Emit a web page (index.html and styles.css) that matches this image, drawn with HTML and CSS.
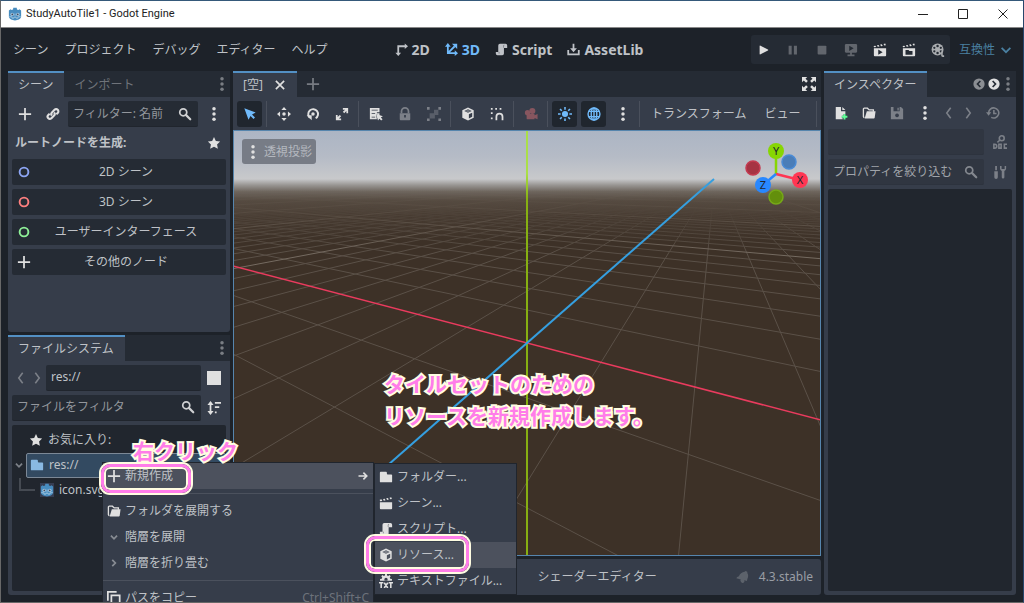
FILE: index.html
```html
<!DOCTYPE html>
<html lang="ja">
<head>
<meta charset="utf-8">
<title>StudyAutoTile1 - Godot Engine</title>
<link rel="stylesheet" href="styles.css">
</head>
<body>
<svg class="sprite" aria-hidden="true">
  <symbol id="plus" viewBox="0 0 16 16"><path d="M7 1h2v6h6v2H9v6H7V9H1V7h6z"/></symbol>
  <symbol id="dots" viewBox="0 0 16 16"><circle cx="8" cy="2" r="2"/><circle cx="8" cy="8" r="2"/><circle cx="8" cy="14" r="2"/></symbol>
  <symbol id="link" viewBox="0 0 16 16"><g fill="none" stroke="currentColor" stroke-width="2.400"><path d="M6.800 9.800a2.600 2.600 0 0 1 0-3.600l3-3a2.500 2.500 0 0 1 3.600 3.600l-1.600 1.600"/><path d="M9.200 6.200a2.600 2.600 0 0 1 0 3.600l-3 3a2.500 2.500 0 0 1-3.600-3.600l1.600-1.600"/></g></symbol>
  <symbol id="search" viewBox="0 0 16 16"><circle cx="6" cy="6" r="4" fill="none" stroke="currentColor" stroke-width="2"/><path d="M9 9l5 5" stroke="currentColor" stroke-width="2.500" stroke-linecap="round"/></symbol>
  <symbol id="star" viewBox="0 0 16 16"><path d="M8 1.200l2.100 4.400 4.900.7-3.500 3.400.9 4.900L8 12.300l-4.400 2.300.9-4.900L1 6.300l4.900-.7z"/></symbol>
  <symbol id="ring" viewBox="0 0 16 16"><circle cx="8" cy="8" r="5" fill="none" stroke="currentColor" stroke-width="2.200"/></symbol>
  <symbol id="left" viewBox="0 0 10 16"><path d="M7.500 2L3 8l4.500 6" fill="none" stroke="currentColor" stroke-width="1.800"/></symbol>
  <symbol id="right" viewBox="0 0 10 16"><path d="M2.500 2L7 8l-4.500 6" fill="none" stroke="currentColor" stroke-width="1.800"/></symbol>
  <symbol id="down" viewBox="0 0 16 16"><path d="M3 5.500l5 5 5-5" fill="none" stroke="currentColor" stroke-width="2"/></symbol>
  <symbol id="smalldown" viewBox="0 0 16 16"><path d="M4.500 6.500L8 10l3.500-3.500" fill="none" stroke="currentColor" stroke-width="2"/></symbol>
  <symbol id="smallright" viewBox="0 0 16 16"><path d="M6 4.500L9.500 8 6 11.500" fill="none" stroke="currentColor" stroke-width="2"/></symbol>
  <symbol id="arrow" viewBox="0 0 16 16"><path d="M2 8h10M8.500 3.500L13 8l-4.500 4.500" fill="none" stroke="currentColor" stroke-width="2.200"/></symbol>
  <symbol id="cross" viewBox="0 0 16 16"><path d="M2.500 2.500l11 11M13.500 2.500l-11 11" stroke="currentColor" stroke-width="2.200"/></symbol>
  <symbol id="sort" viewBox="0 0 16 16"><path d="M3 4.500H.5L4 0l3.500 4.500H5v7h2.500L4 16 .5 11.500H3zM9 1h7v2H9zM9 6h5v2H9zM9 12h2v2H9z"/></symbol>
  <symbol id="folder" viewBox="0 0 16 16"><path d="M2 2a1 1 0 0 0-1 1v10a1 1 0 0 0 1 1h12a1 1 0 0 0 1-1V6a1 1 0 0 0-1-1h-4a1 1 0 0 1-1-1V3a1 1 0 0 0-1-1z"/></symbol>
  <symbol id="open" viewBox="0 0 16 16"><path d="M2.500 13.500L1.600 12V3.500a1 1 0 0 1 1-1h3.600l2 2H13v2" fill="none" stroke="currentColor" stroke-width="1.500"/><path d="M5.500 6H15.500l-1 7.500a1 1 0 0 1-1 .8H3z"/></symbol>
  <symbol id="clapper" viewBox="0 0 16 16"><path d="M1 7h14v7a1 1 0 0 1-1 1H2a1 1 0 0 1-1-1zM.8 4.200l2-.4 1 1.800-2.600.3zM4.600 3.400l1.900-.4 1 1.900-2 .4zM8.300 2.600l1.900-.4 1 1.900-2 .4zM12 1.900l2-.4.700 1.900-1.800.4z"/></symbol>
  <symbol id="script" viewBox="0 0 16 16"><path d="M6 1a2 2 0 0 0-2 2v8H1v2a2 2 0 0 0 2 2h6a2 2 0 0 0 2-2V6h4V3a2 2 0 0 0-2-2z"/><path d="M10.500 5.800V3.500a1 1 0 0 1 1-1M5 11v2" fill="none" stroke="#1d2229" stroke-opacity=".45"/></symbol>
  <symbol id="cube" viewBox="0 0 16 16"><path d="M8 .7L1.500 3.800v8.400L8 15.300l6.500-3.100V3.800zM8 2.600l4.300 2L8 6.700l-4.300-2.100zM9 8.400l3.800-1.800v4.600L9 13z" fill-rule="evenodd"/><path d="M8 3l3.500 1.600L8 6.300 4.500 4.600z" opacity=".35"/></symbol>
  <symbol id="text" viewBox="0 0 16 16"><path d="M7 0h2l.3 1.800 1.200.5L12 1.200 13.400 2.600l-1.100 1.500.5 1.200 2 .3v2H1.200v-2l2-.3.5-1.200-1.100-1.500L4 1.200l1.500 1.100 1.200-.5zM8 4.300A1.900 1.900 0 0 0 6.100 6.200L6.500 8h3l.4-1.800A1.900 1.900 0 0 0 8 4.300z" fill-rule="evenodd"/><path d="M0 10h5M2.500 10v6M6 10l4 6M10 10l-4 6M11 10h5M13.500 10v6" stroke="currentColor" stroke-width="1.800"/></symbol>
  <symbol id="copy" viewBox="0 0 16 16"><path d="M1 11V1h10M5 5h9.500v10H5z" fill="none" stroke="currentColor" stroke-width="2"/></symbol>
  <symbol id="axis2" viewBox="0 0 16 16"><path d="M4 13V4h9" fill="none" stroke="currentColor" stroke-width="2.200"/><path d="M12 .5L16 4l-4 3.500zM.5 12h7L4 16z"/></symbol>
  <symbol id="axis3" viewBox="0 0 16 16"><path d="M3.500 3v9.500H13M3.500 12.500L12 4" fill="none" stroke="currentColor" stroke-width="2.200"/><path d="M0 4.500L3.500 0 7 4.500zM12 9l4 3.500-4 3.500zM8.500 1H15v6.500z"/></symbol>
  <symbol id="download" viewBox="0 0 16 16"><path d="M1.500 8.500V14h13V8.500M8 1v7" fill="none" stroke="currentColor" stroke-width="2.200"/><path d="M3.800 6.500h8.400L8 11.500z"/></symbol>
  <symbol id="play" viewBox="0 0 16 16"><path d="M3 3.500v9a.6.6 0 0 0 1 .4l8.500-4.400a.6.6 0 0 0 0-1L4 3.100a.6.6 0 0 0-1 .4z"/></symbol>
  <symbol id="pause" viewBox="0 0 16 16"><path d="M3 3h3.500v10H3zM9 3h3.500v10H9z"/></symbol>
  <symbol id="stop" viewBox="0 0 16 16"><rect x="3" y="3" width="10" height="10" rx="1"/></symbol>
  <symbol id="remote" viewBox="0 0 16 16"><path d="M2 1h12l1 1v8l-1 1H9v2h3v2H4v-2h3v-2H2l-1-1V2zM6 3v6l5-3z" fill-rule="evenodd"/></symbol>
  <symbol id="playscene" viewBox="0 0 16 16"><path d="M1 6h14v8a1 1 0 0 1-1 1H2a1 1 0 0 1-1-1zM6 7.500v6L11 10.500zM.7 3.400l2-.4 1 1.600-2.500.3zM4.500 2.600l1.900-.4 1 1.900-2 .3zM8.200 1.800l1.900-.4 1 1.900-2 .4zM12 1l2-.4.700 1.900-1.800.4z" fill-rule="evenodd"/></symbol>
  <symbol id="playcustom" viewBox="0 0 16 16"><path d="M1 6h14v8a1 1 0 0 1-1 1H2a1 1 0 0 1-1-1zM4 8v5.500h8V9H8.500l-1-1zM.7 3.400l2-.4 1 1.600-2.500.3zM4.500 2.600l1.900-.4 1 1.900-2 .3zM8.200 1.800l1.900-.4 1 1.900-2 .4zM12 1l2-.4.700 1.900-1.800.4z" fill-rule="evenodd"/></symbol>
  <symbol id="movie" viewBox="0 0 16 16"><circle cx="7.500" cy="7.500" r="6.800"/><g fill="#252b34"><circle cx="7.500" cy="3.500" r="1.400"/><circle cx="7.500" cy="11.500" r="1.400"/><circle cx="3.800" cy="5.500" r="1.300"/><circle cx="11.200" cy="5.500" r="1.300"/><circle cx="3.800" cy="9.500" r="1.300"/><circle cx="11.200" cy="9.500" r="1.300"/></g><path d="M12.500 9.500v4.500a1 1 0 0 0 1 1H15" fill="none" stroke="currentColor" stroke-width="1.800"/></symbol>
  <symbol id="cursor" viewBox="0 0 16 16"><path d="M1.500 1.500l4.800 13 2.300-4.200 3.400 3.400 1.700-1.700-3.400-3.400 4.200-2.300z"/></symbol>
  <symbol id="move" viewBox="0 0 16 16"><path d="M8 0l3 3.500H5zM8 16l-3-3.500h6zM0 8l3.500-3v6zM16 8l-3.500 3V5z"/><circle cx="8" cy="8" r="2"/></symbol>
  <symbol id="rotate" viewBox="0 0 16 16"><path d="M4.500 12.300A5.600 5.600 0 1 1 11 12.900" fill="none" stroke="currentColor" stroke-width="2.200"/><path d="M.8 9.500h5.700v5.700z"/><circle cx="8" cy="8" r="2"/></symbol>
  <symbol id="scale" viewBox="0 0 16 16"><path d="M9 1h6v6h-2V4.500L10.500 7 9 5.500 11.500 3H9zM1 9h2v2.500L5.500 9 7 10.500 4.500 13H7v2H1z"/></symbol>
  <symbol id="list" viewBox="0 0 16 16"><path d="M1 1h11v5H9v1h3v3l-1.500-.8L8 8l1 6H1zM3 3v1h7V3zm0 4v1h4V7zm0 4v1h4v-1z" fill-rule="evenodd"/><path d="M8 8l2.300 7.500 1.600-2.200 2 2.200 1.600-1.500-2-2.100 2.400-1.400z"/></symbol>
  <symbol id="lock" viewBox="0 0 16 16"><path d="M4 7V5a4 4 0 0 1 8 0v2" fill="none" stroke="currentColor" stroke-width="2"/><path d="M2 7h12v7a1 1 0 0 1-1 1H3a1 1 0 0 1-1-1zM7 9v3h2V9z" fill-rule="evenodd"/></symbol>
  <symbol id="group" viewBox="0 0 16 16"><path d="M0 0h3v3H0zM13 0h3v3h-3zM0 13h3v3H0zM13 13h3v3h-3z"/><path d="M8 3h5v6H9v4H3V7h5z" opacity=".5"/></symbol>
  <symbol id="magnet" viewBox="0 0 16 16"><path d="M1 1h2v2H1zM6 1h2v2H6zM11 1h2v2h-2zM1 6h2v2H1zM1 12h2v2H1z"/><path d="M7.300 15v-4a3.500 3.500 0 0 1 7 0v4" fill="none" stroke="currentColor" stroke-width="2"/></symbol>
  <symbol id="camera" viewBox="0 0 16 16"><circle cx="9.500" cy="4.500" r="3.500"/><circle cx="4" cy="6.500" r="3"/><path d="M3 8h9v1.500L15.500 8v6L12 12.500V14H4a1 1 0 0 1-1-1z"/></symbol>
  <symbol id="sun" viewBox="0 0 16 16"><circle cx="8" cy="8" r="3.500"/><path d="M8 0v3M8 13v3M0 8h3M13 8h3M2.300 2.300l2 2M11.700 11.700l2 2M2.300 13.700l2-2M11.700 4.300l2-2" stroke="currentColor" stroke-width="1.800"/></symbol>
  <symbol id="globe" viewBox="0 0 16 16"><g fill="none" stroke="currentColor" stroke-width="1.600"><circle cx="8" cy="8" r="6.800"/><ellipse cx="8" cy="8" rx="3.200" ry="6.800"/><path d="M8 1v14M2 5h12M2 11h12"/></g></symbol>
  <symbol id="expand" viewBox="0 0 16 16"><path d="M0 0h6L4 2l2.700 2.700-2 2L2 4 0 6zM16 0v6l-2-2-2.700 2.700-2-2L12 2l-2-2zM0 16v-6l2 2 2.700-2.700 2 2L4 14l2 2zM16 16h-6l2-2-2.700-2.700 2-2L14 12l2-2z"/></symbol>
  <symbol id="new" viewBox="0 0 16 16"><path d="M2 1h6v5h5v3h-2v2H9v3h1v1H2zM9.500 1L13 4.700H9.500z"/><path d="M12 9v6.500M8.800 12.300h6.500" stroke="#5fff97" stroke-width="2.200"/></symbol>
  <symbol id="save" viewBox="0 0 16 16"><path d="M1 1h11.500L15 3.500V15H1zM4 1v5h7V1zM8 8.500a2.200 2.200 0 1 0 .1 0z" fill-rule="evenodd"/><path d="M8.500 2H10v3H8.500z"/></symbol>
  <symbol id="circleleft" viewBox="0 0 16 16"><circle cx="8" cy="8" r="7.500"/><path d="M9.800 4L6 8l3.800 4" fill="none" stroke="#252b34" stroke-width="2.200"/></symbol>
  <symbol id="circleright" viewBox="0 0 16 16"><circle cx="8" cy="8" r="7.500"/><path d="M6.200 4L10 8l-3.800 4" fill="none" stroke="#252b34" stroke-width="2.200"/></symbol>
  <symbol id="history" viewBox="0 0 16 16"><path d="M3 8a5.800 5.800 0 1 1 3 5M9 4.500v4h3" fill="none" stroke="currentColor" stroke-width="1.800"/><path d="M0 7h6l-3 4z"/></symbol>
  <symbol id="doc" viewBox="0 0 16 16"><g fill="none" stroke="currentColor" stroke-width="1.800"><circle cx="10" cy="3.700" r="2.800"/><path d="M8 5.700L5 8.500M1 10.500v4.500h1a2.200 2.200 0 0 0 0-4.500zM6.700 10.600h2.600V15H6.700zM16 10.600h-3V15h3"/></g></symbol>
  <symbol id="tools" viewBox="0 0 16 16"><path d="M2.500 1h2v5h-2zM1.500 7h4v7a2 2 0 0 1-4 0zM8 1v3a3 3 0 0 0 2 2.800V14a1.500 1.500 0 0 0 3 0V6.800A3 3 0 0 0 15 4V1h-1.700v3.500h-3.500V1z"/></symbol>
  <symbol id="bell" viewBox="0 0 16 16"><path d="M12 1l2 1 .2 1.600c1.300 2 1 4.400 0 6.400l-.6 2.600-3-.8a2 2 0 0 1-3.600 1.800 2 2 0 0 1-.4-2.800L1.500 9.500l1-1.600 2-.8C5.500 4.500 8 2 11 2z"/></symbol>
  <symbol id="godot" viewBox="0 0 16 16"><path d="M1 4l2-1.500 1 1 1.800-.6L6 .8h4l.2 2.100 1.800.6 1-1L15 4v7.500C14 14 11.500 15.300 8 15.300S2 14 1 11.500z" fill="#478cbf"/><circle cx="4.700" cy="8.500" r="2" fill="#a9cbe4"/><circle cx="11.300" cy="8.500" r="2" fill="#a9cbe4"/><circle cx="4.900" cy="8.500" r="1" fill="#414a5c"/><circle cx="11.100" cy="8.500" r="1" fill="#414a5c"/><path d="M8 7.500v2.500M1.500 11l3 .3.300 1.500h1.700L7 11.500h2l.5 1.300h1.700l.3-1.500 3-.3" fill="none" stroke="#a9cbe4"/></symbol>
</svg>

<div class="window">
  <header class="titlebar">
    <svg class="logo"><use href="#godot"/></svg>
    <h1>StudyAutoTile1 - Godot Engine</h1>
    <button aria-label="最小化"><svg viewBox="0 0 10 10"><path d="M0 5.500h10"/></svg></button>
    <button aria-label="最大化"><svg viewBox="0 0 10 10"><path d="M.5.500h9v9h-9z"/></svg></button>
    <button aria-label="閉じる"><svg viewBox="0 0 10 10"><path d="M.5.500l9 9M9.500.500l-9 9"/></svg></button>
  </header>

  <div class="menubar">
    <nav class="menus">
      <button>シーン</button><button>プロジェクト</button><button>デバッグ</button><button>エディター</button><button>ヘルプ</button>
    </nav>
    <nav class="modes">
      <button><svg><use href="#axis2"/></svg>2D</button>
      <button class="on"><svg><use href="#axis3"/></svg>3D</button>
      <button><svg><use href="#script"/></svg>Script</button>
      <button><svg><use href="#download"/></svg>AssetLib</button>
    </nav>
    <div class="run">
      <div class="runbar">
        <button class="tool" aria-label="実行"><svg><use href="#play"/></svg></button>
        <button class="tool dim" aria-label="一時停止"><svg><use href="#pause"/></svg></button>
        <button class="tool dim" aria-label="停止"><svg><use href="#stop"/></svg></button>
        <button class="tool dim" aria-label="リモート"><svg><use href="#remote"/></svg></button>
        <button class="tool" aria-label="シーンを実行"><svg><use href="#playscene"/></svg></button>
        <button class="tool" aria-label="シーンを選んで実行"><svg><use href="#playcustom"/></svg></button>
        <button class="tool soft" aria-label="ムービー"><svg><use href="#movie"/></svg></button>
      </div>
      <label class="renderer"><select aria-label="レンダラー"><option>互換性</option></select><svg><use href="#down"/></svg></label>
    </div>
  </div>

  <main class="workspace">
    <div class="column">
      <section class="dock">
        <div class="tabs"><button class="tab on">シーン</button><button class="tab">インポート</button><button class="more" aria-label="ドックの設定"><svg><use href="#dots"/></svg></button></div>
        <div class="body">
          <div class="row">
            <button class="tool" aria-label="追加"><svg><use href="#plus"/></svg></button>
            <button class="tool" aria-label="インスタンス化"><svg><use href="#link"/></svg></button>
            <label class="field"><input placeholder="フィルター: 名前" aria-label="フィルター"><svg><use href="#search"/></svg></label>
            <button class="tool" aria-label="その他"><svg><use href="#dots"/></svg></button>
          </div>
          <div class="row heading"><h2>ルートノードを生成:</h2><button class="tool" aria-label="お気に入り"><svg><use href="#star"/></svg></button></div>
          <button class="node blue"><svg><use href="#ring"/></svg><span>2D シーン</span></button>
          <button class="node red"><svg><use href="#ring"/></svg><span>3D シーン</span></button>
          <button class="node green"><svg><use href="#ring"/></svg><span>ユーザーインターフェース</span></button>
          <button class="node"><svg><use href="#plus"/></svg><span>その他のノード</span></button>
        </div>
      </section>

      <section class="dock">
        <div class="tabs"><button class="tab on">ファイルシステム</button><button class="more" aria-label="ドックの設定"><svg><use href="#dots"/></svg></button></div>
        <div class="body">
          <div class="row tight">
            <button class="step" aria-label="戻る"><svg><use href="#left"/></svg></button>
            <button class="step" aria-label="進む"><svg><use href="#right"/></svg></button>
            <label class="field"><input value="res://" aria-label="パス"></label>
            <button class="tool" aria-label="分割モード"><span class="square"></span></button>
          </div>
          <div class="row tight">
            <label class="field"><input placeholder="ファイルをフィルタ" aria-label="ファイルをフィルタ"><svg><use href="#search"/></svg></label>
            <button class="tool" aria-label="並べ替え"><svg><use href="#sort"/></svg></button>
          </div>
          <ul class="tree">
            <li class="fav"><svg><use href="#star"/></svg>お気に入り:</li>
            <li class="root"><svg class="fold"><use href="#smalldown"/></svg><span class="selected"><svg><use href="#folder"/></svg>res://</span></li>
            <li class="file"><span class="branch"></span><svg class="thumb"><use href="#godot"/></svg>icon.svg</li>
          </ul>
        </div>
      </section>
    </div>

    <div class="column">
      <section class="editor">
        <div class="tabs"><button class="tab on">[空]<svg><use href="#cross"/></svg></button><button class="add" aria-label="シーンを追加"><svg><use href="#plus"/></svg></button><button class="wide" aria-label="集中モード"><svg><use href="#expand"/></svg></button></div>
        <div class="toolbar">
          <button class="tool on" aria-label="選択"><svg><use href="#cursor"/></svg></button>
          <i class="sep"></i>
          <button class="tool" aria-label="移動"><svg><use href="#move"/></svg></button>
          <button class="tool" aria-label="回転"><svg><use href="#rotate"/></svg></button>
          <button class="tool" aria-label="拡大縮小"><svg><use href="#scale"/></svg></button>
          <i class="sep"></i>
          <button class="tool" aria-label="リスト選択"><svg><use href="#list"/></svg></button>
          <button class="tool dim" aria-label="ロック"><svg><use href="#lock"/></svg></button>
          <button class="tool dim" aria-label="グループ化"><svg><use href="#group"/></svg></button>
          <i class="sep"></i>
          <button class="tool" aria-label="ローカル空間"><svg><use href="#cube"/></svg></button>
          <button class="tool" aria-label="スナップ"><svg><use href="#magnet"/></svg></button>
          <i class="sep"></i>
          <button class="tool cam" aria-label="カメラ"><svg><use href="#camera"/></svg></button>
          <i class="sep"></i>
          <button class="tool on" aria-label="太陽光"><svg><use href="#sun"/></svg></button>
          <button class="tool on" aria-label="環境"><svg><use href="#globe"/></svg></button>
          <button class="tool" aria-label="その他"><svg><use href="#dots"/></svg></button>
          <i class="sep"></i>
          <button class="word">トランスフォーム</button>
          <button class="word">ビュー</button>
          <i class="sep last"></i>
        </div>
        <div class="viewport">
          <svg class="scene" viewBox="-293 -212 586 424" preserveAspectRatio="xMidYMid slice">
            <defs>
              <linearGradient id="sky" x1="0" y1="0" x2="0" y2="1">
                <stop offset="0" stop-color="#acb5c4"/><stop offset=".06" stop-color="#b5bbc6"/><stop offset=".113" stop-color="#c8c9cb"/>
                <stop offset=".128" stop-color="#979491"/><stop offset=".143" stop-color="#6e665e"/><stop offset=".165" stop-color="#554a40"/>
                <stop offset=".2" stop-color="#473b31"/><stop offset=".26" stop-color="#3d3127"/><stop offset="1" stop-color="#3d3127"/>
              </linearGradient>
              <linearGradient id="fade" gradientUnits="userSpaceOnUse" x1="0" y1="-212" x2="0" y2="212">
                <stop offset=".14" stop-color="#000"/><stop offset=".2" stop-color="#555"/><stop offset=".29" stop-color="#fff"/>
              </linearGradient>
              <mask id="haze" maskUnits="userSpaceOnUse" x="-600" y="-212" width="1200" height="424"><rect x="-600" y="-212" width="1200" height="424" fill="url(#fade)"/></mask>
              <linearGradient id="green" gradientUnits="userSpaceOnUse" x1="0" y1="-212" x2="0" y2="212"><stop offset=".1" stop-color="#aadf48"/><stop offset=".16" stop-color="#86b012"/><stop offset="1" stop-color="#87ae12"/></linearGradient>
            </defs>
            <rect x="-600" y="-212" width="1200" height="424" fill="url(#sky)"/>
            <g mask="url(#haze)"><path id="minor"/><path id="major"/></g>
            <path id="axisx"/>
            <path id="axisy" d="M0-212V212"/>
            <path id="axisz"/>
          </svg>
          <button class="view"><svg><use href="#dots"/></svg>透視投影</button>
          <svg class="gizmo" viewBox="0 0 64 64">
            <g stroke-width="2.500"><path d="M31 32V8" stroke="#87d602"/><path d="M31 32l24 6" stroke="#ff3653"/><path d="M31 32L18 43" stroke="#2888ff"/></g>
            <g stroke-width="1.500"><circle cx="8" cy="26" r="7" fill="#a63343" stroke="#c43a50"/><circle cx="44" cy="20" r="7" fill="#4a7db8" stroke="#4a8bd6"/><circle cx="31" cy="55" r="7" fill="#638f0c" stroke="#76a818"/></g>
            <circle cx="31" cy="9" r="8" fill="#87d602"/><circle cx="55" cy="38" r="8" fill="#ff3653"/><circle cx="18" cy="43" r="8" fill="#2888ff"/>
            <text x="31" y="13">Y</text><text x="55" y="42">X</text><text x="18" y="47">Z</text>
          </svg>
        </div>
      </section>
      <footer class="bottom">
        <button>シェーダーエディター</button>
        <svg><use href="#bell"/></svg><span>4.3.stable</span>
      </footer>
    </div>

    <section class="dock">
      <div class="tabs"><button class="tab on">インスペクター</button><div class="pager"><svg class="back"><use href="#circleleft"/></svg><svg><use href="#circleright"/></svg></div><button class="more" aria-label="ドックの設定"><svg><use href="#dots"/></svg></button></div>
      <div class="body">
        <div class="row short">
          <button class="tool" aria-label="新規リソース"><svg><use href="#new"/></svg></button>
          <button class="tool" aria-label="開く"><svg><use href="#open"/></svg></button>
          <button class="tool dim" aria-label="保存"><svg><use href="#save"/></svg></button>
          <button class="tool" aria-label="その他"><svg><use href="#dots"/></svg></button>
          <button class="step" aria-label="前へ"><svg><use href="#left"/></svg></button>
          <button class="step" aria-label="次へ"><svg><use href="#right"/></svg></button>
          <button class="tool dim" aria-label="履歴"><svg><use href="#history"/></svg></button>
        </div>
        <div class="row"><div class="field off"></div><button class="tool dim" aria-label="ドキュメント"><svg><use href="#doc"/></svg></button></div>
        <div class="row"><label class="field off"><input placeholder="プロパティを絞り込む" aria-label="プロパティを絞り込む"><svg><use href="#search"/></svg></label><button class="tool dim" aria-label="プロパティ設定"><svg><use href="#tools"/></svg></button></div>
        <div class="panel"></div>
      </div>
    </section>
  </main>

  <div class="popup context" role="menu">
    <button class="hover"><svg><use href="#plus"/></svg>新規作成<svg class="end"><use href="#arrow"/></svg></button>
    <hr>
    <button><svg><use href="#open"/></svg>フォルダを展開する</button>
    <button><svg class="grey"><use href="#smalldown"/></svg>階層を展開</button>
    <button><svg class="grey"><use href="#smallright"/></svg>階層を折り畳む</button>
    <hr>
    <button><svg><use href="#copy"/></svg>パスをコピー<kbd>Ctrl+Shift+C</kbd></button>
  </div>
  <div class="popup submenu" role="menu">
    <button><svg><use href="#folder"/></svg>フォルダー...</button>
    <button><svg><use href="#clapper"/></svg>シーン...</button>
    <button><svg><use href="#script"/></svg>スクリプト...</button>
    <button class="hover"><svg><use href="#cube"/></svg>リソース...</button>
    <button><svg><use href="#text"/></svg>テキストファイル...</button>
  </div>

  <div class="frame first"></div>
  <div class="frame second"></div>
  <p class="note click">右クリック</p>
  <p class="note explain">タイルセットのための<br>リソースを新規作成します。</p>
</div>
<script src="grid.js"></script>
</body>
</html>
```
FILE: grid.js
```js
// Ground grid seen by an orbit camera: yaw and pitch of 0.5 rad, 4 units from the origin.
const yaw = 0.5, pitch = 0.5, distance = 4, focal = 302, near = 0.3, extent = 100;

function toCamera(x, z) {
  const side = x * Math.cos(yaw) - z * Math.sin(yaw);
  const ahead = -x * Math.sin(yaw) - z * Math.cos(yaw);
  return [side, -ahead * Math.sin(pitch), distance + ahead * Math.cos(pitch)];
}

function segment(x1, z1, x2, z2) {
  let a = toCamera(x1, z1), b = toCamera(x2, z2);
  if (a[2] < near && b[2] < near) return "";
  if (a[2] > b[2]) [a, b] = [b, a];
  if (a[2] < near) {
    const t = (near - a[2]) / (b[2] - a[2]);
    a = a.map((v, i) => v + t * (b[i] - v));
  }
  const point = p => (focal * p[0] / p[2]).toFixed(1) + " " + (focal * p[1] / p[2]).toFixed(1);
  return "M" + point(a) + "L" + point(b);
}

let minor = "", major = "";
for (let i = -extent; i <= extent; i++) {
  if (i === 0) continue;
  const lines = segment(i, -extent, i, extent) + segment(-extent, i, extent, i);
  if (i % 8 === 0) major += lines;
  else if (Math.abs(i) < 40) minor += lines;
}
document.getElementById("minor").setAttribute("d", minor);
document.getElementById("major").setAttribute("d", major);
document.getElementById("axisx").setAttribute("d", segment(-1000, 0, 1000, 0));
document.getElementById("axisz").setAttribute("d", segment(0, -1000, 0, 1000));
```
FILE: styles.css
```css
* { box-sizing: border-box; }

body {
  margin: 0;
  background: #1d2229;
  color: #bfc2c7;
  font: 12px/18px "Noto Sans", "Noto Sans CJK JP", sans-serif;
}

button, input, select {
  margin: 0;
  padding: 0;
  border: 0;
  background: none;
  color: inherit;
  font: inherit;
}

button { white-space: nowrap; }
h1, h2, p, ul { margin: 0; padding: 0; font: inherit; }
svg { width: 14px; height: 14px; flex: none; fill: currentColor; }
.sprite { position: absolute; width: 0; height: 0; }

.window {
  position: relative;
  display: flex;
  flex-direction: column;
  height: 100vh;
  overflow: hidden;
  border: 1px solid #686868;
  border-top-color: #35597a;
  border-right-color: #28476c;
}

.titlebar {
  display: flex;
  align-items: center;
  height: 27px;
  padding-left: 7px;
  border-bottom: 1px solid #888;
  background: #fff;
  color: #222;
}
.titlebar h1 { flex: 1; margin-left: 4px; font: 11px/18px Roboto, sans-serif; }
.titlebar button { display: grid; place-items: center; width: 40px; height: 24px; }
.titlebar button svg { width: 10px; height: 10px; fill: none; stroke: #222; }

.menubar {
  display: grid;
  grid-template-columns: 1fr auto 1fr;
  align-items: center;
  height: 43px;
  flex: none;
  padding: 0 11px 0 12px;
}
.menus { display: flex; gap: 16px; }
.modes { display: flex; gap: 15px; margin-left: 13px; font-size: 14px; font-weight: 700; }
.modes button { display: flex; align-items: center; gap: 4px; }
.modes svg { width: 13px; height: 13px; }
.modes .on { color: #70bafa; }
.run { display: flex; justify-content: flex-end; align-items: center; gap: 9px; }
.runbar { display: flex; gap: 4px; padding: 1px 0; border-radius: 3px; background: #252b34; }
.runbar .tool { height: 27px; }
.renderer { display: flex; align-items: center; gap: 3px; margin-right: -1px; color: #4a80a1; }
.renderer select { appearance: none; }

.tool { display: grid; place-items: center; flex: none; width: 25px; height: 26px; border-radius: 3px; color: #e0e0e0; }
.tool.dim { color: #7c8088; }
.tool.soft { color: #aaadb0; }
.tool.on { background: #20262e; color: #70bafa; }
.tool.cam { color: #87565f; }
.runbar .dim { color: #62666d; }
.step { display: grid; place-items: center; flex: none; width: 17px; height: 24px; color: #7c8088; }
.step svg { width: 9px; }
.square { width: 14px; height: 14px; background: #e0e0e0; }

.workspace {
  flex: 1;
  min-height: 0;
  display: grid;
  grid-template-columns: 222px minmax(0, 1fr) 192px;
  gap: 3px;
  padding: 0 7px 7px;
}
.column { display: flex; flex-direction: column; gap: 3px; min-height: 0; }
.dock { flex: 1; display: flex; flex-direction: column; min-height: 0; border-radius: 3px; background: #363d4a; }
.tabs { display: flex; align-items: stretch; flex: none; height: 26px; background: #252b34; }
.tab { display: flex; align-items: center; gap: 11px; padding: 0 10px; border-top: 2px solid transparent; color: #6f737a; }
.tab.on { padding: 0 11px 0 10px; border-top-color: #5390c4; background: #363d4a; color: #bfc2c7; }
.tab svg { width: 12px; height: 12px; color: #e0e0e0; }
.more, .wide { display: grid; place-items: center; margin-left: auto; width: 16px; color: #7a7e84; }
.wide { width: 25px; color: #e0e0e0; }
.add { display: grid; place-items: center; width: 32px; color: #777b82; }
.pager { display: flex; align-items: center; gap: 3px; margin-left: auto; color: #e0e0e0; }
.pager svg { width: 12px; height: 12px; }
.pager .back { color: #8b8e93; }
.pager + .more { margin-left: 0; }

.body { flex: 1; display: flex; flex-direction: column; gap: 4px; min-height: 0; padding: 4px; }
.row { display: flex; align-items: center; gap: 3px; min-height: 26px; }
.row.short { min-height: 24px; height: 24px; }
.row.tight { gap: 0; }
.row.heading { justify-content: space-between; min-height: 24px; height: 24px; padding-left: 3px; }
.heading h2 { font-weight: 700; }
.field {
  flex: 1;
  min-width: 0;
  display: flex;
  align-items: center;
  height: 26px;
  padding: 0 6px 0 5px;
  border-bottom: 1px solid #20252d;
  border-radius: 2px;
  background: #252b34;
}
.field.off { border-color: #2d333e; background: #303641; color: #8b8f96; }
.field input { flex: 1; min-width: 0; outline: 0; }
.field svg { color: #cfd0d2; }
.field.off svg { color: #84888f; }
.field input::placeholder { color: #93979d; opacity: 1; }
.field.off input::placeholder { color: #a0a4aa; }

.node { display: flex; align-items: center; height: 26px; flex: none; padding: 0 5px; border-radius: 2px; background: #252b34; }
.node span { flex: 1; }
.node svg { color: #e0e0e0; }
.node.blue svg { color: #8da5f3; }
.node.red svg { color: #fc7f7f; }
.node.green svg { color: #8eef97; }

.tree, .panel { flex: 1; min-height: 0; border-radius: 2px; background: #21262e; }
.tree { padding-top: 3px; list-style: none; }
.tree li { display: flex; align-items: center; height: 25px; }
.tree svg { color: #e0e0e0; }
.tree .fav { gap: 5px; padding-left: 17px; }
.tree .fold { width: 14px; color: #7c8088; }
.selected { flex: 1; display: flex; align-items: center; gap: 5px; height: 25px; padding-left: 3px; border: 1px solid #7c8896; border-radius: 2px; background: #334a61; }
.tree .selected svg { color: #89b9e3; }
.branch { align-self: flex-start; width: 16px; height: 13px; margin: 0 5px 0 7px; border: solid #454a52; border-width: 0 0 2px 2px; }
.thumb { margin-right: 5px; background: #363d52; }

.editor { flex: 1; min-height: 0; display: flex; flex-direction: column; }
.toolbar { display: flex; align-items: center; gap: 4px; flex: none; height: 33px; padding: 0 4px; background: #363d4a; }
.sep { width: 1px; height: 26px; background: #4a505c; }
.word { padding: 0 7px; }
.sep.last { margin-left: auto; }
.viewport { position: relative; flex: 1; min-height: 0; border: 1px solid #5685ad; }
.scene { display: block; width: 100%; height: 100%; }
.scene path { fill: none; }
#minor { stroke: #5b5148; stroke-width: 1; }
#major { stroke: #756b61; stroke-width: 1; }
#axisx { stroke: #e93b5e; stroke-width: 1.5; }
#axisy { stroke: url(#green); stroke-width: 2; }
#axisz { stroke: #359fe0; stroke-width: 2; }
.view { position: absolute; left: 8px; top: 8px; display: flex; align-items: center; gap: 4px; height: 25px; padding: 0 4px; border-radius: 3px; background: #777c86; color: #b4b8bf; }
.view svg { color: #e0e0e0; }
.gizmo { position: absolute; top: 11px; right: 11px; width: 64px; height: 64px; }
.gizmo text { fill: #20262e; font-size: 11px; text-anchor: middle; }

.bottom { display: flex; align-items: center; justify-content: flex-end; flex: none; height: 36px; padding: 0 8px; border-radius: 3px; background: #363d4a; }
.bottom svg { margin: 0 10px 0 78px; color: #5c626b; }
.bottom span { color: #9a9ea5; }

.popup { position: absolute; border: 1px solid #20252d; background: #363d4a; }
.popup button { display: flex; align-items: center; gap: 4px; width: 100%; height: 26px; padding: 0 4px; }
.popup .hover { background: #4c515d; }
.popup svg { color: #e0e0e0; }
.popup .grey { color: #888c93; }
.popup .end { margin-left: auto; width: 12px; }
.popup hr { margin: 4px 0; border: 0; border-top: 1px solid #4b515d; }
.popup kbd { margin-left: auto; color: #6d727b; font: inherit; }
.context { left: 101px; top: 461px; width: 272px; }
.submenu { left: 373px; top: 462px; width: 143px; }

.note {
  position: absolute;
  color: #ff7de9;
  font: 700 21px/32px "Noto Sans CJK JP", sans-serif;
  -webkit-text-stroke: 4px #fffde2;
  paint-order: stroke fill;
  white-space: nowrap;
}
.click { left: 132px; top: 433px; }
.explain { left: 383px; top: 366px; }
.frame { position: absolute; border: 3px solid #ff7de9; border-radius: 9px; box-shadow: 0 0 0 2px #fffde2, inset 0 0 0 2px #fffde2; }
.first { left: 100px; top: 463px; width: 90px; height: 29px; }
.second { left: 365px; top: 535px; width: 103px; height: 36px; }
```
